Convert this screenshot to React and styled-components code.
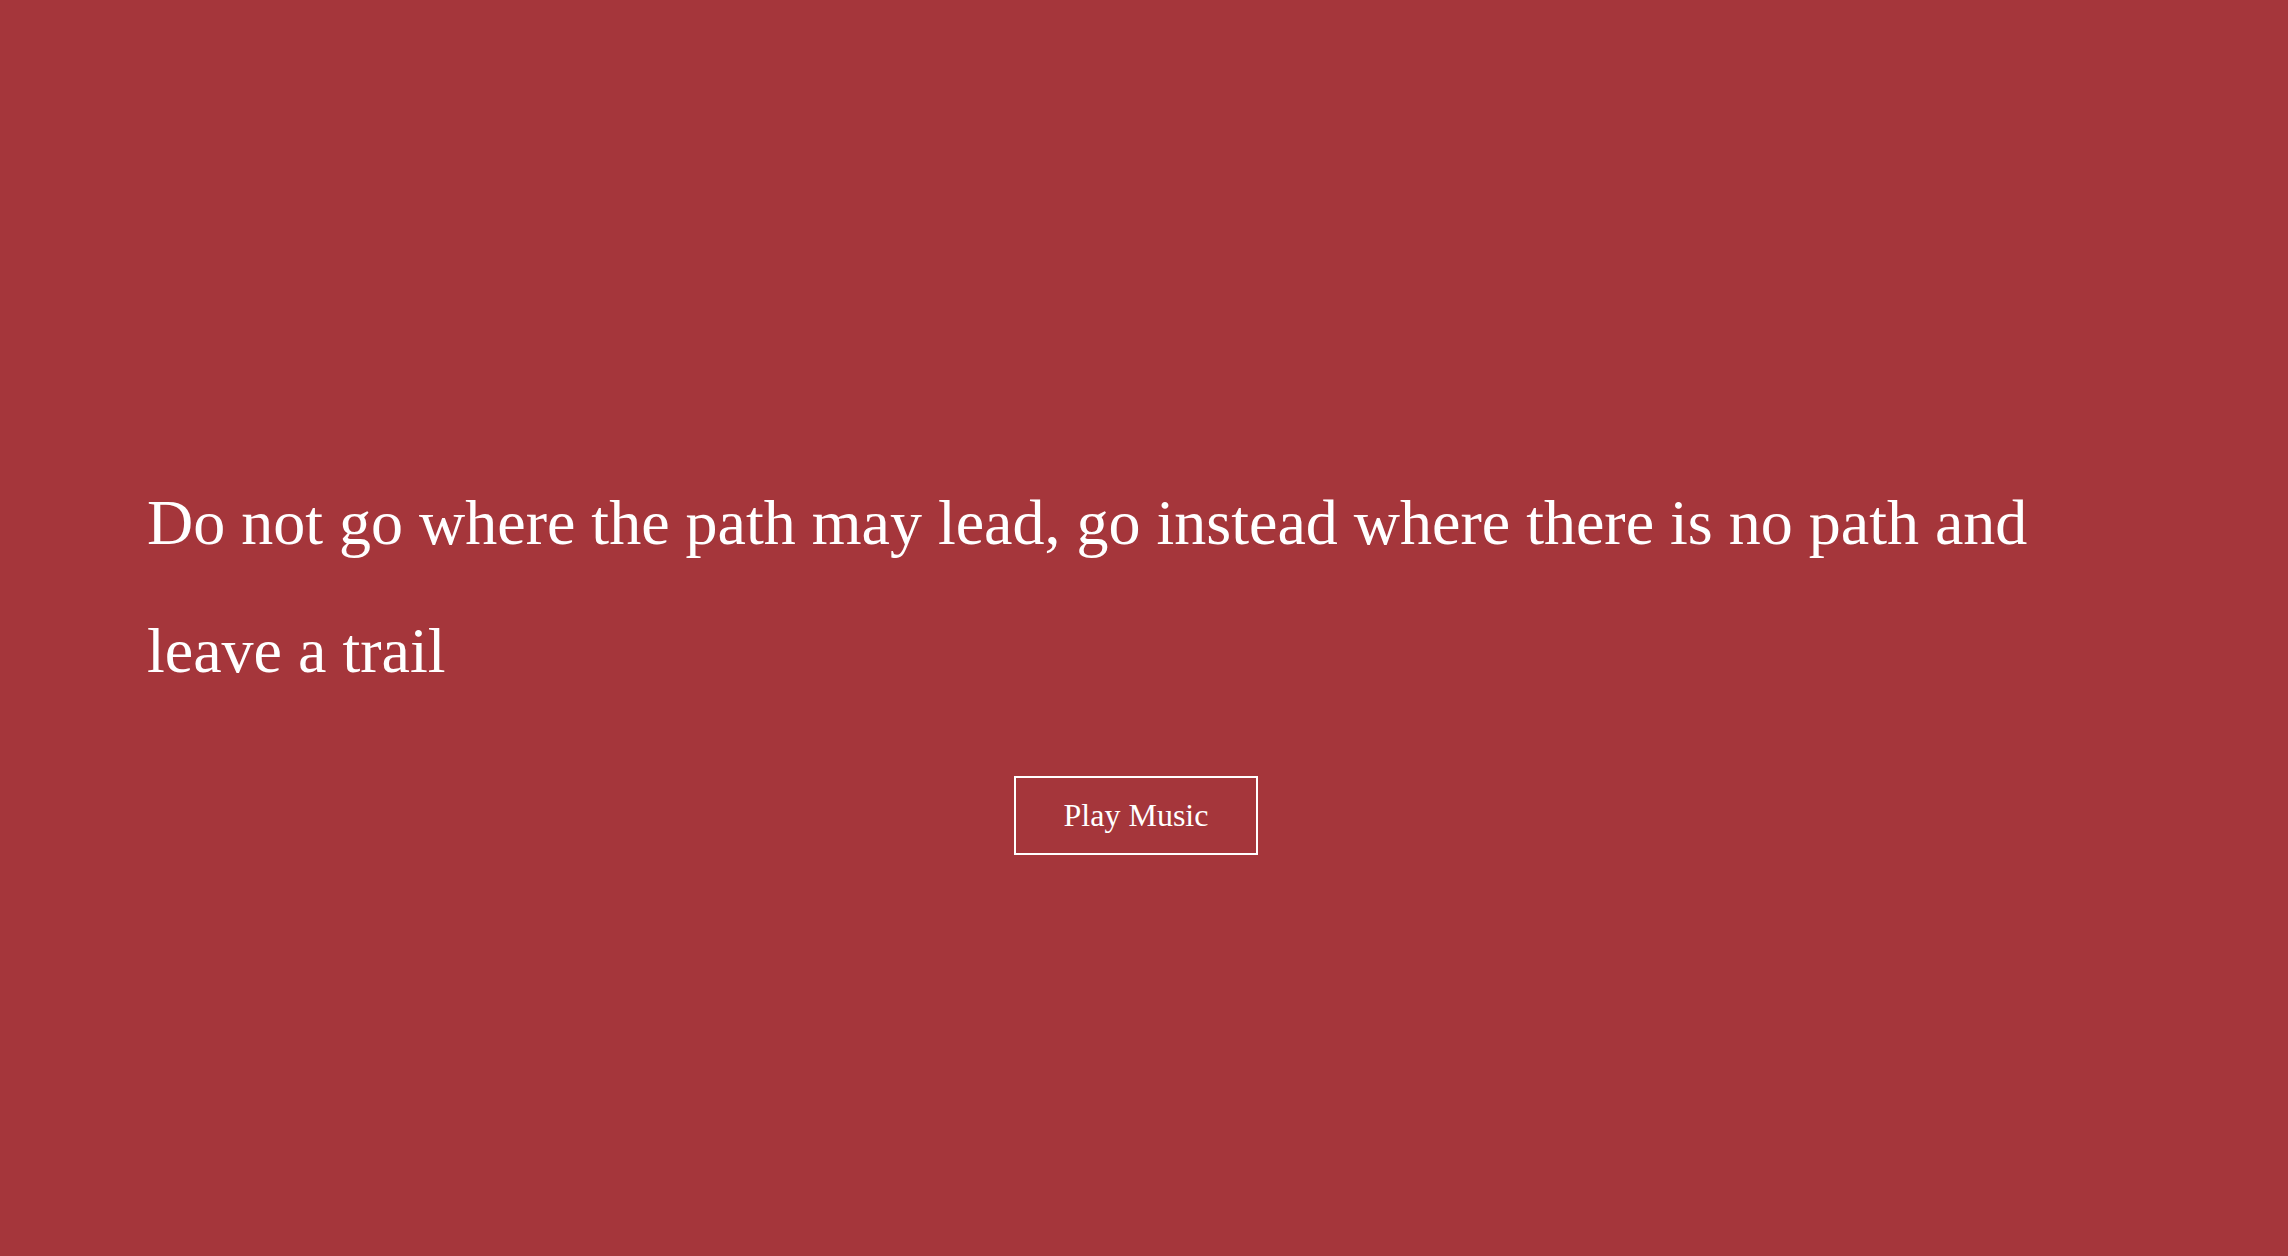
import React from "react";
import styled, { createGlobalStyle } from "styled-components";

const Global = createGlobalStyle`
  html, body { margin: 0; padding: 0; background: #a5363b; }
  body { font-family: "Liberation Serif", "Times New Roman", serif; }
`;

const Page = styled.main`
  min-height: 100vh;
  box-sizing: border-box;
  background: #a5363b;
  color: #ffffff;
  padding: 459px 163px 0 147px;
  display: flex;
  flex-direction: column;
`;

const Quote = styled.p`
  margin: 0;
  font-size: 64px;
  line-height: 2;
  font-weight: 400;
`;

const Actions = styled.div`
  display: flex;
  justify-content: center;
  margin-top: 61px;
`;

const Button = styled.button`
  box-sizing: border-box;
  width: 244px;
  height: 79px;
  background: transparent;
  border: 2px solid #ffffff;
  color: #ffffff;
  font-family: "Liberation Serif", "Times New Roman", serif;
  font-size: 32px;
  cursor: pointer;
  padding: 0;
`;

export default function App() {
  return (
    <>
      <Global />
      <Page>
        <Quote>
          Do not go where the path may lead, go instead where there is no path and leave a trail
        </Quote>
        <Actions>
          <Button>Play Music</Button>
        </Actions>
      </Page>
    </>
  );
}
